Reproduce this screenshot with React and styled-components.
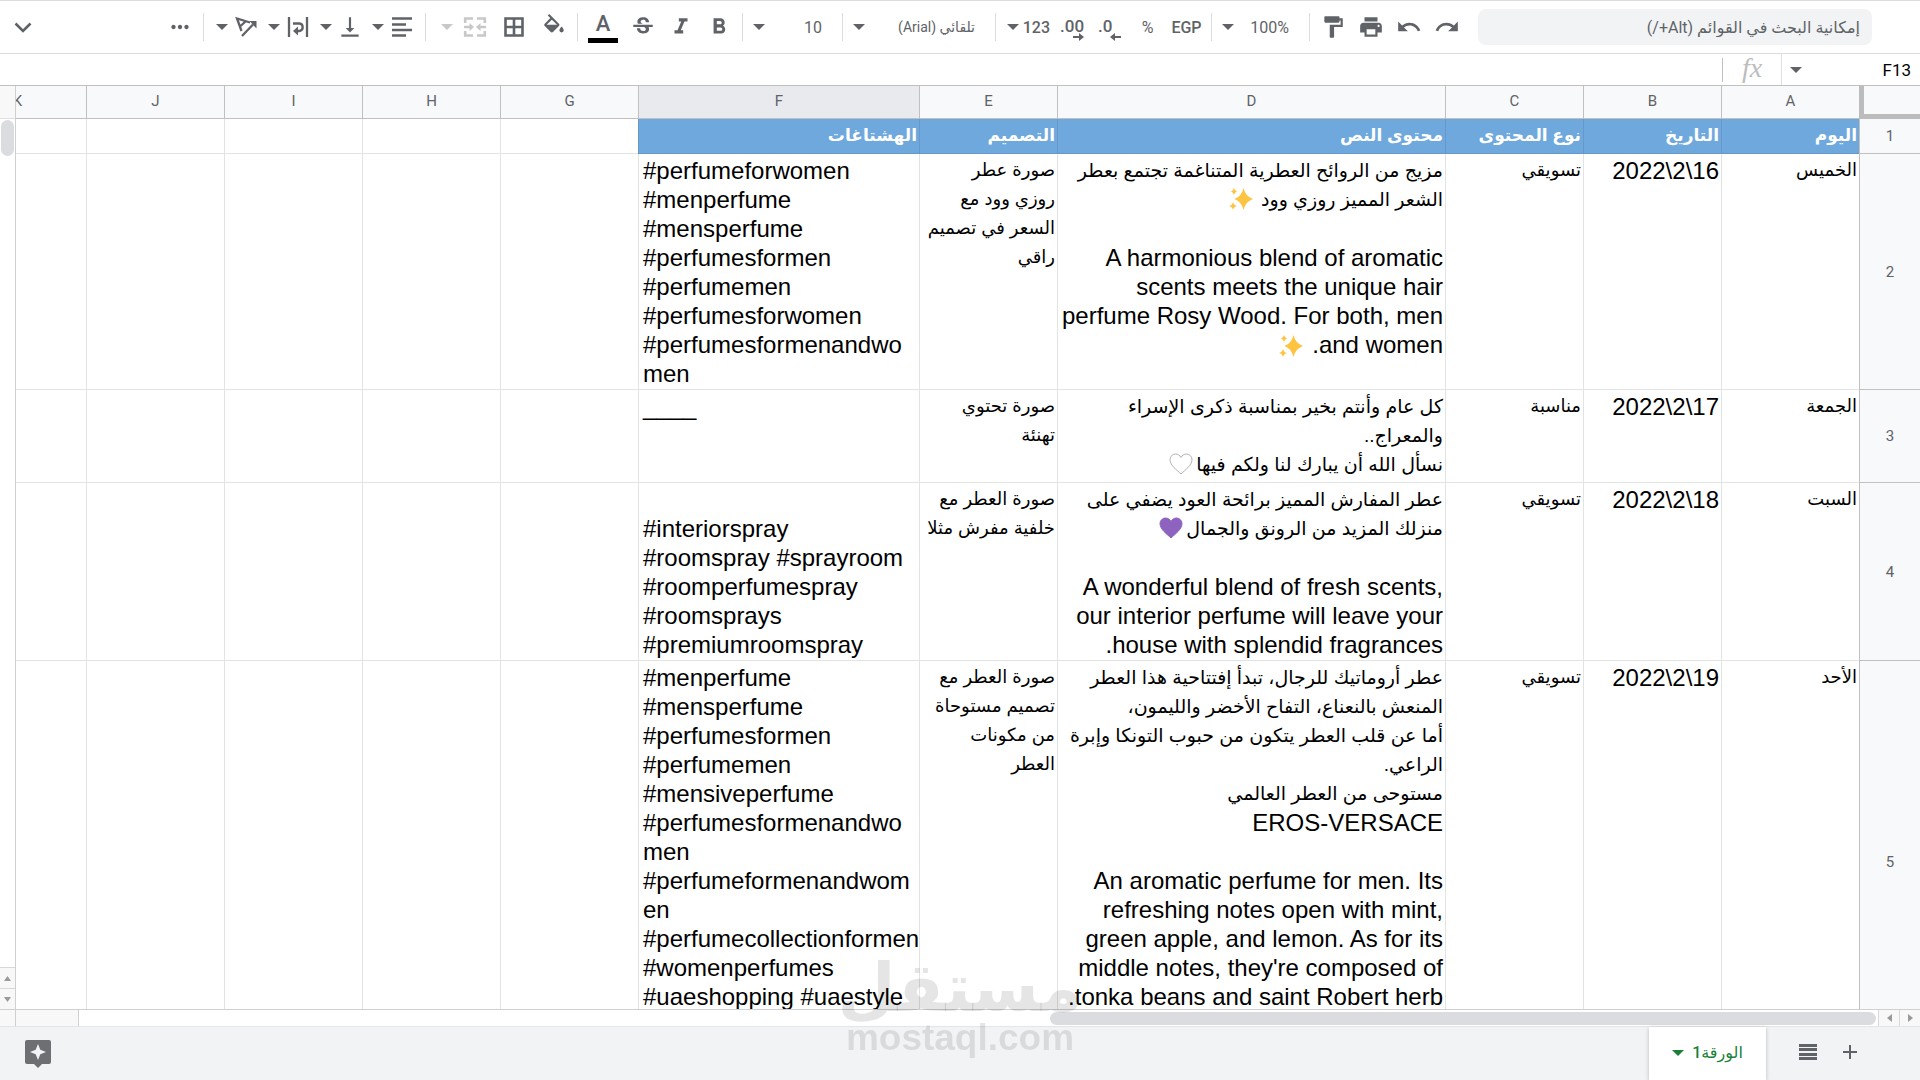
import React from "react";
import styled, { createGlobalStyle, css } from "styled-components";
import {
  MdAdd,
  MdFormatBold,
  MdFormatItalic,
  MdFormatPaint,
  MdMoreHoriz,
  MdPrint,
  MdRedo,
  MdStrikethroughS,
  MdUndo,
  MdVerticalAlignBottom,
} from "react-icons/md";

const GlobalStyle = createGlobalStyle`
  * {
    box-sizing: border-box;
  }

  body {
    margin: 0;
    overflow: hidden;
    background-color: #fff;
    font-family: "Roboto", "DejaVu Sans", sans-serif;
    color: #5f6368;
  }

  button,
  input,
  select {
    font: inherit;
    color: inherit;
    border: none;
    background: none;
    padding: 0;
    margin: 0;
    outline: none;
  }

  button {
    cursor: pointer;
  }

  svg {
    display: block;
    flex: none;
  }
`;

const Page = styled.div`
  display: flex;
  flex-direction: column;
  height: 100vh;
`;

/* Toolbar */

const Toolbar = styled.div`
  display: flex;
  align-items: center;
  height: 54px;
  flex: none;
  padding-right: 48px;
  padding-left: 4px;
  border-top: 1px solid #dadce0;
  border-bottom: 1px solid #dadce0;
  font-size: 16px;
`;

const SearchBox = styled.input`
  width: 394px;
  height: 36px;
  margin-left: 12px;
  padding: 0 12px;
  border-radius: 8px;
  background-color: #f1f3f4;

  &::placeholder {
    color: #5f6368;
    opacity: 1;
  }
`;

const ToolButton = styled.button`
  display: flex;
  align-items: center;
  justify-content: center;
  width: ${({ $width }) => $width || 38}px;
  height: 36px;
  flex: none;
  font-size: 16px;
  font-weight: ${({ $bold }) => ($bold ? 500 : 400)};
  ${({ $last }) =>
    $last &&
    css`
      margin-right: auto;
    `}
`;

const MenuButton = styled(ToolButton)`
  justify-content: flex-start;
  width: ${({ $width }) => $width || 52}px;
  gap: ${({ $gap }) => $gap || 5}px;
  padding-right: 6px;
  opacity: ${({ disabled }) => (disabled ? 0.35 : 1)};
`;

const NumberButton = styled(MenuButton)`
  gap: 4px;
  padding-right: 3px;
`;

const TextColor = styled.span`
  width: 30px;
  height: 32px;
  border-bottom: 5px solid #000;
  font-size: 22px;
  line-height: 26px;
  text-align: center;
`;

const Divider = styled.span`
  width: 1px;
  height: 28px;
  margin: 0 4px;
  flex: none;
  background-color: #dadce0;
`;

const Group = styled.div`
  display: flex;
  padding-left: 5px;
`;

const Combo = styled.label`
  display: flex;
  align-items: center;
  width: ${({ $width }) => $width}px;
  height: 36px;
  padding-left: 6px;
  flex: none;

  select {
    flex: 1;
    min-width: 0;
    height: 100%;
    padding-right: 16px;
    appearance: none;
    font-size: ${({ $small }) => ($small ? 14 : 16)}px;
  }
`;

/* Formula bar */

const FormulaBar = styled.div`
  display: flex;
  align-items: center;
  height: 32px;
  flex: none;
  border-bottom: 1px solid #c0c0c0;
`;

const NameBox = styled.label`
  display: flex;
  align-items: center;
  width: 139px;
  height: 100%;
  padding-left: 8px;
  border-left: 1px solid #e0e0e0;

  input {
    flex: 1;
    min-width: 0;
    padding-right: 9px;
    font-size: 17px;
    color: #000;
  }
`;

const FxLabel = styled.label`
  width: 59px;
  height: 24px;
  border-left: 1px solid #c0c0c0;
  text-align: center;
  font: italic 28px / 20px "Liberation Serif", serif;
  color: #bdbdbd;
`;

const FormulaInput = styled.input`
  flex: 1;
  height: 100%;
`;

/* Sheet */

const SheetArea = styled.main`
  display: flex;
  flex: 1;
  min-height: 0;
`;

const SheetView = styled.div`
  flex: 1;
  min-width: 0;
  overflow: hidden;
`;

const Sheet = styled.table`
  width: max(100%, 1972px);
  table-layout: fixed;
  border-collapse: separate;
  border-spacing: 0;
`;

const ColumnHead = styled.th`
  height: 33px;
  padding: 0 0 2px;
  border-left: 1px solid #c0c0c0;
  border-bottom: 1px solid #c0c0c0;
  background-color: ${({ $selected }) => ($selected ? "#e8eaed" : "#f8f9fa")};
  font-size: 15px;
  font-weight: 400;
`;

const Corner = styled.td`
  padding: 0;
  border-left: 5px solid #bcbcbc;
  border-bottom: 5px solid #bcbcbc;
  background-color: #f8f9fa;
`;

const RowHead = styled.th`
  height: ${({ $height }) => $height}px;
  padding: 0;
  border-left: 1px solid #c0c0c0;
  border-bottom: 1px solid #c0c0c0;
  background-color: #f8f9fa;
  font-size: 15px;
  font-weight: 400;
`;

const Cell = styled.td`
  padding: 2px 2px 0 0;
  border-left: 1px solid #e2e3e3;
  border-bottom: 1px solid #e2e3e3;
  vertical-align: top;
  text-align: right;
  font-family: "Liberation Sans", "DejaVu Sans", sans-serif;
  font-size: 24px;
  line-height: 29px;
  color: #000;
`;

const TitleCell = styled(Cell)`
  border-color: #6699c8;
  background-color: #6fa8dc;
  color: #fff;
`;

const TagCell = styled(Cell)`
  padding: 2px 0 0 5px;
  direction: ltr;
  text-align: left;
  white-space: pre;
`;

const Line = styled.div`
  min-height: 29px;
`;

const ArabicLine = styled(Line)`
  font-size: ${({ $size }) => $size || 18}px;
  font-weight: ${({ $bold }) => ($bold ? 700 : 400)};
  white-space: nowrap;
`;

const Emoji = styled.svg`
  display: inline-block;
  width: 24px;
  height: 22px;
  margin: 0 3px;
  vertical-align: -4px;
`;

/* Scroll bars */

const VerticalBar = styled.div`
  display: flex;
  flex-direction: column;
  width: 16px;
  flex: none;
  border-right: 1px solid #d0d0d0;
`;

const BarCap = styled.div`
  height: 33px;
  flex: none;
  background-color: #f8f8f8;
  border-bottom: 1px solid #e0e0e0;
`;

const VerticalThumb = styled.div`
  height: 36px;
  margin: 1px 1px auto 1px;
  border-radius: 7px;
  background-color: #dadce0;
`;

const Arrow = styled.button`
  display: flex;
  align-items: center;
  justify-content: center;
  width: ${({ $side }) => ($side ? 21 : 15)}px;
  height: ${({ $side }) => ($side ? 16 : 21)}px;
  background-color: #f8f8f8;
  color: #9a9a9a;
  ${({ $side }) =>
    $side
      ? css`
          border-left: 1px solid #d8d8d8;
        `
      : css`
          border-top: 1px solid #d8d8d8;
        `}
`;

const HorizontalBar = styled.div`
  display: flex;
  align-items: center;
  height: 17px;
  flex: none;
  border-top: 1px solid #d0d0d0;
`;

const HorizontalThumb = styled.div`
  width: 43%;
  min-width: 40px;
  height: 13px;
  margin: 0 2px 0 auto;
  border-radius: 7px;
  background-color: #dadce0;
`;

const FrozenHandle = styled.div`
  width: 64px;
  height: 16px;
  border-right: 1px solid #d0d0d0;
  border-left: 1px solid #d0d0d0;
  background-color: #f8f8f8;
`;

const BarCorner = styled.div`
  width: 15px;
  height: 16px;
  background-color: #f8f8f8;
`;

/* Footer */

const Footer = styled.footer`
  display: flex;
  align-items: center;
  height: 54px;
  flex: none;
  padding: 0 49px 0 24px;
  border-top: 1px solid #e3e5e8;
  background-color: #f1f3f4;
`;

const FooterButton = styled.button`
  display: flex;
  justify-content: center;
  width: 42px;
  padding-bottom: 4px;
`;

const SheetTab = styled.button`
  display: flex;
  align-items: center;
  justify-content: center;
  gap: 8px;
  width: 117px;
  height: 100%;
  margin-right: 21px;
  padding-bottom: 2px;
  background-color: #fff;
  box-shadow: 0 1px 4px rgba(60, 64, 67, 0.3);
  font-size: 16px;
  font-weight: 500;
  color: #188038;
`;

const ExploreButton = styled(FooterButton)`
  width: 28px;
  margin-right: auto;
  padding-bottom: 0;
`;

const Watermark = styled.div`
  position: fixed;
  left: 50%;
  bottom: 20px;
  transform: translateX(-50%);
  pointer-events: none;
  text-align: center;
  font-family: "Liberation Sans", "DejaVu Sans", sans-serif;
  font-weight: 700;
  color: rgba(0, 0, 0, 0.1);
`;

const WatermarkName = styled.div`
  font-size: 67px;
  line-height: 56px;
`;

const WatermarkSite = styled.div`
  font-size: 37px;
  line-height: 44px;
`;

const ICON = 26;

const Caret = () => (
  <svg width="12" height="6" viewBox="0 0 12 6" fill="currentColor">
    <path d="M0 0h12L6 6z" />
  </svg>
);

const ChevronIcon = () => (
  <svg width={ICON} height={ICON} viewBox="0 0 26 26" fill="none">
    <path d="M5.500 9.500l7.500 7.500 7.500-7.500" stroke="currentColor" strokeWidth="2.6" />
  </svg>
);

const AlignIcon = () => (
  <svg width={ICON} height={ICON} viewBox="0 0 26 26" fill="none">
    <path
      d="M3 4.500h20M3 10.500h14M3 16h20M3 21.500h14"
      stroke="currentColor"
      strokeWidth="2.6"
    />
  </svg>
);

const WrapIcon = () => (
  <svg width={ICON} height={ICON} viewBox="0 0 26 26" fill="none">
    <path
      d="M4 3v20M22 3v20M8 9.500h6.500a3.800 3.800 0 0 1 0 7.500H12"
      stroke="currentColor"
      strokeWidth="2.3"
    />
    <path d="M8 17l5-4.500v9z" fill="currentColor" />
  </svg>
);

const RotateIcon = () => (
  <svg width={ICON} height={ICON} viewBox="0 0 26 26" fill="none">
    <path
      d="M17 8.500L4 4.500l4.500 12.500M12.500 7.500l-5.500 5M9 22L20 10.500"
      stroke="currentColor"
      strokeWidth="2.3"
    />
    <path d="M23.500 7v7.500L16.500 7z" fill="currentColor" />
  </svg>
);

const MergeIcon = () => (
  <svg width={ICON} height={ICON} viewBox="0 0 26 26" fill="none">
    <path
      d="M3.200 9V4.500H11M15 4.500h7.800V9M3.200 17v4.500H11M15 21.500h7.800V17"
      stroke="currentColor"
      strokeWidth="2.6"
    />
    <path d="M2 13h6M24 13h-6" stroke="currentColor" strokeWidth="2.3" />
    <path d="M7.500 9l4.500 4-4.500 4zM18.500 9L14 13l4.500 4z" fill="currentColor" />
  </svg>
);

const BordersIcon = () => (
  <svg width={ICON} height={ICON} viewBox="0 0 26 26" fill="none">
    <path
      d="M4.500 4.500h17v17h-17zM13 4.500v17M4.500 13h17"
      stroke="currentColor"
      strokeWidth="2.6"
    />
  </svg>
);

const FillIcon = () => (
  <svg width={ICON} height={ICON} viewBox="0 0 24 24" fill="currentColor">
    <path d="M16.560 8.940L7.620 0 6.210 1.410l2.380 2.380-5.150 5.150c-.59.59-.59 1.540 0 2.120l5.500 5.500c.29.29.68.44 1.060.44s.77-.15 1.060-.44l5.500-5.500c.59-.58.59-1.530 0-2.120zM5.210 10L10 5.210 14.790 10zM19 11.500s-2 2.170-2 3.500a2 2 0 0 0 4 0c0-1.330-2-3.500-2-3.500z" />
  </svg>
);

const DecimalIcon = ({ text, more }) => (
  <svg width={ICON} height={30} viewBox="0 0 26 30" fill="currentColor">
    <text x="1" y="20" fontSize="17" fontWeight="500" direction="ltr">
      {text}
    </text>
    {more ? (
      <path d="M14 24h6v-3l5 4-5 4v-3h-6z" />
    ) : (
      <path d="M24 24h-6v-3l-5 4 5 4v-3h6z" />
    )}
  </svg>
);

const ListIcon = () => (
  <svg width="18" height="16" viewBox="0 0 18 16" fill="currentColor">
    <path d="M0 0h18v3H0zM0 4h18v3H0zM0 9h18v3H0zM0 13h18v3H0z" />
  </svg>
);

const ExploreIcon = () => (
  <svg width="26" height="28" viewBox="0 0 26 28">
    <path
      d="M2 0h22a2 2 0 0 1 2 2v20a2 2 0 0 1-2 2h-7l-4 4-4-4H2a2 2 0 0 1-2-2V2a2 2 0 0 1 2-2z"
      fill="#6e6f73"
    />
    <path
      d="M13 4l2.300 5.700L21 12l-5.700 2.300L13 20l-2.300-5.700L5 12l5.700-2.300z"
      fill="#f1f3f4"
    />
  </svg>
);

const Sparkles = () => (
  <Emoji viewBox="0 0 24 22" fill="#fcc441">
    <path d="M14.500 0q2 8.500 9.500 11-7.500 2.500-9.500 11Q12.500 13.500 5.500 11 12.500 8.500 14.500 0z" />
    <path d="M5 0q.8 3 3 3.500Q5.800 4 5 7 4.200 4 2 3.500 4.200 3 5 0z" />
    <path d="M4 14q.9 3.500 4 4-3.100.5-4 4-.9-3.500-4-4 3.100-.5 4-4z" />
  </Emoji>
);

const Heart = ({ fill, stroke }) => (
  <Emoji viewBox="0 0 24 22" fill={fill} stroke={stroke}>
    <path d="M12 21C8 17 1 12.500 1 6.500 1 3.500 3.500 1 6.500 1 9 1 11 2.500 12 4.500 13 2.500 15 1 17.500 1c3 0 5.500 2.500 5.500 5.500C23 12.500 16 17 12 21z" />
  </Emoji>
);

const columns = [
  { name: "A", width: 138 },
  { name: "B", width: 138 },
  { name: "C", width: 138 },
  { name: "D", width: 388 },
  { name: "E", width: 138 },
  { name: "F", width: 281 },
  { name: "G", width: 138 },
  { name: "H", width: 138 },
  { name: "I", width: 138 },
  { name: "J", width: 138 },
  { name: "K" },
];

const emptyColumns = ["G", "H", "I", "J", "K"];

const titles = [
  "اليوم",
  "التاريخ",
  "نوع المحتوى",
  "محتوى النص",
  "التصميم",
  "الهشتاغات",
];

const rows = [
  {
    height: 236,
    day: "الخميس",
    date: "16\\2\\2022",
    type: "تسويقي",
    text: [
      { ar: "مزيج من الروائح العطرية المتناغمة تجتمع بعطر" },
      { ar: "الشعر المميز روزي وود ", icon: <Sparkles /> },
      {},
      {
        en: "A harmonious blend of aromatic scents meets the unique hair perfume Rosy Wood. For both, men and women. ",
        icon: <Sparkles />,
      },
    ],
    design: ["صورة عطر", "روزي وود مع", "السعر في تصميم", "راقي"],
    tags: [
      "#perfumeforwomen",
      "#menperfume",
      "#mensperfume",
      "#perfumesformen",
      "#perfumemen",
      "#perfumesforwomen",
      "#perfumesformenandwo",
      "men",
    ],
  },
  {
    height: 93,
    day: "الجمعة",
    date: "17\\2\\2022",
    type: "مناسبة",
    text: [
      { ar: "كل عام وأنتم بخير بمناسبة ذكرى الإسراء" },
      { ar: "والمعراج.." },
      {
        ar: "نسأل الله أن يبارك لنا ولكم فيها",
        icon: <Heart fill="#fff" stroke="#b0b0b0" />,
      },
    ],
    design: ["صورة تحتوي", "تهنئة"],
    tags: ["____"],
  },
  {
    height: 178,
    day: "السبت",
    date: "18\\2\\2022",
    type: "تسويقي",
    text: [
      { ar: "عطر المفارش المميز برائحة العود يضفي على" },
      {
        ar: "منزلك المزيد من الرونق والجمال",
        icon: <Heart fill="#8e63c0" stroke="#8e63c0" />,
      },
      {},
      {
        en: "A wonderful blend of fresh scents, our interior perfume will leave your house with splendid fragrances.",
      },
    ],
    design: ["صورة العطر مع", "خلفية مفرش مثلا"],
    tags: [
      "",
      "#interiorspray",
      "#roomspray #sprayroom",
      "#roomperfumespray",
      "#roomsprays",
      "#premiumroomspray",
    ],
  },
  {
    height: 403,
    day: "الأحد",
    date: "19\\2\\2022",
    type: "تسويقي",
    text: [
      { ar: "عطر أروماتيك للرجال، تبدأ إفتتاحية هذا العطر" },
      { ar: "المنعش بالنعناع، التفاح الأخضر والليمون،" },
      { ar: "أما عن قلب العطر يتكون من حبوب التونكا وإبرة" },
      { ar: "الراعي." },
      { ar: "مستوحى من العطر العالمي" },
      { en: "EROS-VERSACE" },
      {},
      {
        en: "An aromatic perfume for men. Its refreshing notes open with mint, green apple, and lemon. As for its middle notes, they're composed of tonka beans and saint Robert herb.",
      },
    ],
    design: ["صورة العطر مع", "تصميم مستوحاة", "من مكونات", "العطر"],
    tags: [
      "#menperfume",
      "#mensperfume",
      "#perfumesformen",
      "#perfumemen",
      "#mensiveperfume",
      "#perfumesformenandwo",
      "men",
      "#perfumeformenandwom",
      "en",
      "#perfumecollectionformen",
      "#womenperfumes",
      "#uaeshopping #uaestyle",
    ],
  },
];

const TextLine = ({ line }) => {
  if (line.ar) {
    return (
      <ArabicLine $size={19}>
        {line.ar}
        {line.icon}
      </ArabicLine>
    );
  }
  return (
    <Line>
      {line.en}
      {line.icon}
    </Line>
  );
};

const MainToolbar = () => (
  <Toolbar>
    <SearchBox
      aria-label="إمكانية البحث في القوائم"
      placeholder="إمكانية البحث في القوائم (Alt+/)"
    />
    <ToolButton aria-label="إعادة">
      <MdRedo size={ICON} />
    </ToolButton>
    <ToolButton aria-label="تراجع">
      <MdUndo size={ICON} />
    </ToolButton>
    <ToolButton aria-label="طباعة">
      <MdPrint size={ICON} />
    </ToolButton>
    <ToolButton aria-label="نسخ التنسيق">
      <MdFormatPaint size={ICON} />
    </ToolButton>
    <Divider />
    <Combo $width={89}>
      <select aria-label="تكبير/تصغير">
        <option>100%</option>
      </select>
      <Caret />
    </Combo>
    <Divider />
    <ToolButton $width={41} $bold>
      EGP
    </ToolButton>
    <ToolButton $width={37}>%</ToolButton>
    <ToolButton aria-label="خفض المنازل العشرية">
      <DecimalIcon text=".0" />
    </ToolButton>
    <ToolButton aria-label="زيادة المنازل العشرية">
      <DecimalIcon text=".00" more />
    </ToolButton>
    <NumberButton $width={53} $bold>
      123
      <Caret />
    </NumberButton>
    <Divider />
    <Combo $width={144} $small>
      <select aria-label="الخط">
        <option>تلقائي (Arial)</option>
      </select>
      <Caret />
    </Combo>
    <Divider />
    <Combo $width={91}>
      <select aria-label="حجم الخط">
        <option>10</option>
      </select>
      <Caret />
    </Combo>
    <Divider />
    <ToolButton aria-label="غامق">
      <MdFormatBold size={ICON} />
    </ToolButton>
    <ToolButton aria-label="مائل">
      <MdFormatItalic size={ICON} />
    </ToolButton>
    <ToolButton aria-label="يتوسطه خط">
      <MdStrikethroughS size={ICON} />
    </ToolButton>
    <ToolButton $width={42} $bold aria-label="لون النص">
      <TextColor>A</TextColor>
    </ToolButton>
    <Divider />
    <ToolButton $width={39} aria-label="لون التعبئة">
      <FillIcon />
    </ToolButton>
    <ToolButton $width={40} aria-label="الحدود">
      <BordersIcon />
    </ToolButton>
    <MenuButton $width={64} $gap={9} disabled aria-label="دمج الخلايا">
      <MergeIcon />
      <Caret />
    </MenuButton>
    <Divider />
    <Group>
      <MenuButton aria-label="محاذاة أفقية">
        <AlignIcon />
        <Caret />
      </MenuButton>
      <MenuButton aria-label="محاذاة عمودية">
        <MdVerticalAlignBottom size={ICON} />
        <Caret />
      </MenuButton>
      <MenuButton aria-label="التفاف النص">
        <WrapIcon />
        <Caret />
      </MenuButton>
      <MenuButton aria-label="تدوير النص">
        <RotateIcon />
        <Caret />
      </MenuButton>
    </Group>
    <Divider />
    <ToolButton $width={39} aria-label="المزيد">
      <MdMoreHoriz size={ICON} />
    </ToolButton>
    <ToolButton $last aria-label="إخفاء القوائم">
      <ChevronIcon />
    </ToolButton>
  </Toolbar>
);

const SheetTable = () => (
  <Sheet>
    <colgroup>
      <col width="61" />
      {columns.map((column) => (
        <col key={column.name} width={column.width} />
      ))}
    </colgroup>
    <thead>
      <tr>
        <Corner />
        {columns.map((column) => (
          <ColumnHead key={column.name} $selected={column.name === "F"}>
            {column.name}
          </ColumnHead>
        ))}
      </tr>
    </thead>
    <tbody>
      <tr>
        <RowHead $height={35}>1</RowHead>
        {titles.map((title) => (
          <TitleCell key={title}>
            <ArabicLine $size={17} $bold>
              {title}
            </ArabicLine>
          </TitleCell>
        ))}
        {emptyColumns.map((name) => (
          <Cell key={name} />
        ))}
      </tr>
      {rows.map((row, index) => (
        <tr key={row.date}>
          <RowHead $height={row.height}>{index + 2}</RowHead>
          <Cell>
            <ArabicLine>{row.day}</ArabicLine>
          </Cell>
          <Cell>{row.date}</Cell>
          <Cell>
            <ArabicLine>{row.type}</ArabicLine>
          </Cell>
          <Cell>
            {row.text.map((line, i) => (
              <TextLine key={i} line={line} />
            ))}
          </Cell>
          <Cell>
            {row.design.map((line) => (
              <ArabicLine key={line}>{line}</ArabicLine>
            ))}
          </Cell>
          <TagCell>{row.tags.join("\n")}</TagCell>
          {emptyColumns.map((name) => (
            <Cell key={name} />
          ))}
        </tr>
      ))}
    </tbody>
  </Sheet>
);

const App = () => (
  <Page dir="rtl">
    <GlobalStyle />
    <MainToolbar />
    <FormulaBar>
      <NameBox>
        <input aria-label="مربع الاسم" defaultValue="F13" />
        <Caret />
      </NameBox>
      <FxLabel htmlFor="formula">fx</FxLabel>
      <FormulaInput id="formula" />
    </FormulaBar>
    <SheetArea>
      <SheetView>
        <SheetTable />
      </SheetView>
      <VerticalBar>
        <BarCap />
        <VerticalThumb />
        <Arrow aria-label="أعلى">
          <svg width="7" height="5" viewBox="0 0 7 5" fill="currentColor">
            <path d="M0 5h7L3.500 0z" />
          </svg>
        </Arrow>
        <Arrow aria-label="أسفل">
          <svg width="7" height="5" viewBox="0 0 7 5" fill="currentColor">
            <path d="M0 0h7L3.500 5z" />
          </svg>
        </Arrow>
      </VerticalBar>
    </SheetArea>
    <HorizontalBar>
      <Arrow $side aria-label="يمين">
        <svg width="5" height="8" viewBox="0 0 5 8" fill="currentColor">
          <path d="M0 0v8l5-4z" />
        </svg>
      </Arrow>
      <Arrow $side aria-label="يسار">
        <svg width="5" height="8" viewBox="0 0 5 8" fill="currentColor">
          <path d="M5 0v8L0 4z" />
        </svg>
      </Arrow>
      <HorizontalThumb />
      <FrozenHandle />
      <BarCorner />
    </HorizontalBar>
    <Footer>
      <FooterButton aria-label="إضافة ورقة">
        <MdAdd size={24} />
      </FooterButton>
      <FooterButton aria-label="جميع الأوراق">
        <ListIcon />
      </FooterButton>
      <SheetTab>
        الورقة1
        <Caret />
      </SheetTab>
      <ExploreButton aria-label="استكشاف">
        <ExploreIcon />
      </ExploreButton>
    </Footer>
    <Watermark>
      <WatermarkName>مستقل</WatermarkName>
      <WatermarkSite>mostaql.com</WatermarkSite>
    </Watermark>
  </Page>
);

export default App;
